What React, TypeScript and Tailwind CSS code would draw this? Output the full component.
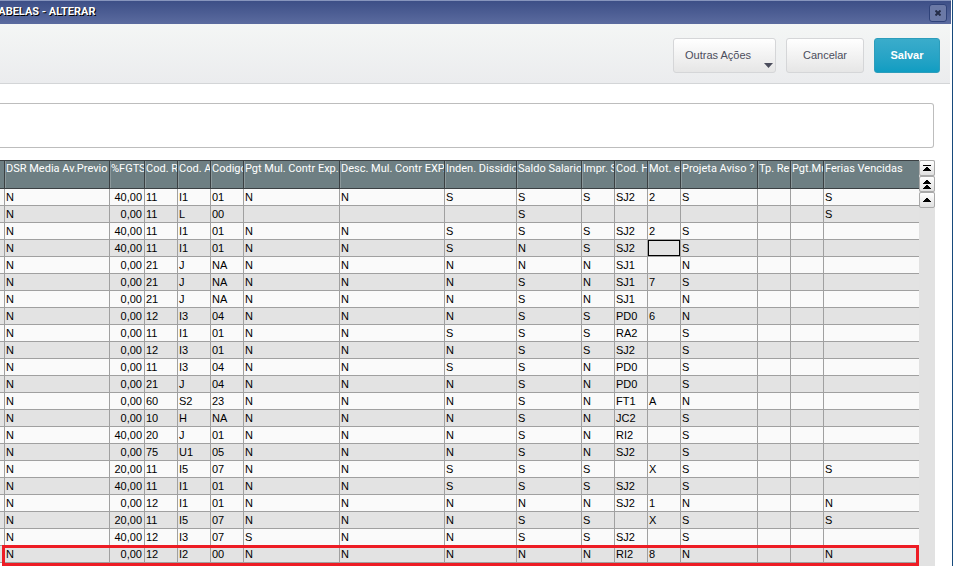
import React from 'react';

interface Column {
  label: string;
  width: string;
  numeric?: boolean;
}

const columns: Column[] = [
  { label: 'DSR Media Av.Previo', width: 'w-[105px]' },
  { label: '%FGTS', width: 'w-[35px]', numeric: true },
  { label: 'Cod. R', width: 'w-[33px]' },
  { label: 'Cod. A', width: 'w-[33px]' },
  { label: 'Codigo', width: 'w-[33px]' },
  { label: 'Pgt Mul. Contr Exp.', width: 'w-[96px]' },
  { label: 'Desc. Mul. Contr EXP.', width: 'w-[105px]' },
  { label: 'Inden. Dissidio', width: 'w-[72px]' },
  { label: 'Saldo Salario', width: 'w-[65px]' },
  { label: 'Impr. S', width: 'w-[33px]' },
  { label: 'Cod. H', width: 'w-[33px]' },
  { label: 'Mot. eS', width: 'w-[33px]' },
  { label: 'Projeta Aviso ?', width: 'w-[77px]' },
  { label: 'Tp. Re', width: 'w-[33px]' },
  { label: 'Pgt.Mu', width: 'w-[33px]' },
  { label: 'Ferias Vencidas', width: '' },
];

const rows: string[][] = [
  ['N', '40,00', '11', 'I1', '01', 'N', 'N', 'S', 'S', 'S', 'SJ2', '2', 'S', '', '', 'S'],
  ['N', '0,00', '11', 'L', '00', '', '', '', 'S', '', '', '', '', '', '', 'S'],
  ['N', '40,00', '11', 'I1', '01', 'N', 'N', 'S', 'S', 'S', 'SJ2', '2', 'S', '', '', ''],
  ['N', '40,00', '11', 'I1', '01', 'N', 'N', 'S', 'N', 'S', 'SJ2', '', 'S', '', '', ''],
  ['N', '0,00', '21', 'J', 'NA', 'N', 'N', 'N', 'N', 'N', 'SJ1', '', 'N', '', '', ''],
  ['N', '0,00', '21', 'J', 'NA', 'N', 'N', 'N', 'S', 'N', 'SJ1', '7', 'S', '', '', ''],
  ['N', '0,00', '21', 'J', 'NA', 'N', 'N', 'N', 'S', 'N', 'SJ1', '', 'N', '', '', ''],
  ['N', '0,00', '12', 'I3', '04', 'N', 'N', 'N', 'S', 'S', 'PD0', '6', 'N', '', '', ''],
  ['N', '0,00', '11', 'I1', '01', 'N', 'N', 'S', 'S', 'S', 'RA2', '', 'S', '', '', ''],
  ['N', '0,00', '12', 'I3', '01', 'N', 'N', 'N', 'S', 'S', 'SJ2', '', 'S', '', '', ''],
  ['N', '0,00', '11', 'I3', '04', 'N', 'N', 'S', 'S', 'N', 'PD0', '', 'S', '', '', ''],
  ['N', '0,00', '21', 'J', '04', 'N', 'N', 'N', 'S', 'N', 'PD0', '', 'S', '', '', ''],
  ['N', '0,00', '60', 'S2', '23', 'N', 'N', 'N', 'S', 'N', 'FT1', 'A', 'N', '', '', ''],
  ['N', '0,00', '10', 'H', 'NA', 'N', 'N', 'N', 'S', 'N', 'JC2', '', 'S', '', '', ''],
  ['N', '40,00', '20', 'J', '01', 'N', 'N', 'N', 'S', 'N', 'RI2', '', 'S', '', '', ''],
  ['N', '0,00', '75', 'U1', '05', 'N', 'N', 'N', 'S', 'N', 'SJ2', '', 'S', '', '', ''],
  ['N', '20,00', '11', 'I5', '07', 'N', 'N', 'S', 'S', 'S', '', 'X', 'S', '', '', 'S'],
  ['N', '40,00', '11', 'I1', '01', 'N', 'N', 'S', 'S', 'S', 'SJ2', '', 'S', '', '', ''],
  ['N', '0,00', '12', 'I1', '01', 'N', 'N', 'N', 'N', 'N', 'SJ2', '1', 'N', '', '', 'N'],
  ['N', '20,00', '11', 'I5', '07', 'N', 'N', 'N', 'S', 'S', '', 'X', 'S', '', '', 'S'],
  ['N', '40,00', '12', 'I3', '07', 'S', 'N', 'N', 'S', 'S', 'SJ2', '', 'S', '', '', ''],
  ['N', '0,00', '12', 'I2', '00', 'N', 'N', 'N', 'N', 'N', 'RI2', '8', 'N', '', '', 'N'],
];

const SELECTED = { row: 3, col: 11 };

const TitleBar = () => (
  <header className="flex h-6 items-center justify-between border-t border-[#8795bd] bg-linear-to-b from-[#3d4f87] to-[#5b6b9f] pr-1">
    <h1 className="-ml-2 font-[Roboto,sans-serif] text-[11px] font-bold text-white [text-shadow:1px_1px_0_#000]">
      TABELAS - ALTERAR
    </h1>
    <button
      aria-label="Fechar"
      className="flex h-[18px] w-[18px] items-center justify-center rounded-[3px] border border-[#2f4279] bg-[#6b79a6]"
    >
      <svg width="6" height="6" viewBox="0 0 6 6" stroke="#252d48" strokeWidth="2">
        <path d="M0.500 0.500l5 5M5.500 0.500l-5 5" />
      </svg>
    </button>
  </header>
);

const Toolbar = () => (
  <div className="mr-px flex h-[60px] items-center justify-end gap-[10px] border-b border-[#d3d5d7] bg-linear-to-b from-[#f4f6f5] to-[#ebecee] pt-1 pr-[10px] text-[11px] text-[#4b4d5c]">
    <button className="relative h-[35px] w-[103px] rounded-[3px] border border-[#d5d6d8] bg-linear-to-b from-white to-[#e6e6e6] pl-[11px] text-left">
      Outras Ações
      <svg className="absolute right-[2px] bottom-1" width="9" height="5" viewBox="0 0 9 5" fill="#4b4d5c">
        <path d="M0 0h9L4.500 5z" />
      </svg>
    </button>
    <button className="h-[35px] w-[78px] rounded-[3px] border border-[#d5d6d8] bg-linear-to-b from-white to-[#e6e6e6]">
      Cancelar
    </button>
    <button className="h-[35px] w-[66px] rounded-[3px] border border-[#2c9dbb] bg-linear-to-b from-[#3aaccb] to-[#0f9dc2] font-bold text-white">
      Salvar
    </button>
  </div>
);

const ScrollButtons = () => {
  const box =
    'flex h-4 w-4 items-center justify-center rounded-[2px] border border-[#a9a9a9] bg-linear-to-b from-white to-[#e0e0e0]';

  return (
    <div className="flex w-4 shrink-0 flex-col bg-[#e2e2e2]">
      <button aria-label="Primeiro" className={box}>
        <svg width="8" height="8" viewBox="0 0 8 8" shapeRendering="crispEdges">
          <path d="M0 1h8v1H0zM3 3h2v1h1v1h1v1h1v1H0V6h1V5h1V4h1z" />
        </svg>
      </button>
      <button aria-label="Página anterior" className={box}>
        <svg width="8" height="10" viewBox="0 0 8 10" shapeRendering="crispEdges">
          <path d="M3 1h2v1h1v1h1v1h1v1H0V4h1V3h1V2h1zM3 6h2v1h1v1h1v1h1v1H0V9h1V8h1V7h1z" />
        </svg>
      </button>
      <button aria-label="Linha anterior" className={box}>
        <svg width="8" height="6" viewBox="0 0 8 6" shapeRendering="crispEdges">
          <path d="M3 1h2v1h1v1h1v1h1v1H0V4h1V3h1V2h1z" />
        </svg>
      </button>
    </div>
  );
};

const Grid = () => (
  <table className="w-full table-fixed border-separate border-spacing-0 text-[11px] leading-4 text-black">
    <colgroup>
      <col className="w-[5px]" />
      {columns.map((column) => (
        <col key={column.label} className={column.width} />
      ))}
    </colgroup>
    <thead>
      <tr className="h-[29px] bg-[#6e7f83] text-white">
        <td className="border-y border-r border-[#3b4043] p-0" />
        {columns.map((column) => (
          <th
            key={column.label}
            className="overflow-hidden border-y border-r border-[#3b4043] p-0 pl-px text-left align-top font-[Roboto,sans-serif] font-normal whitespace-nowrap shadow-[inset_1px_0_0_#8b989b] last:border-r-0"
          >
            {column.label}
          </th>
        ))}
      </tr>
    </thead>
    <tbody>
      {rows.map((row, rowIndex) => (
        <tr key={rowIndex} className="h-[17px] odd:bg-[#fafafa] even:bg-[#e3e3e3]">
          <td className="border-r border-b border-[#a0a0a0] p-0" />
          {row.map((value, colIndex) => {
            const selected = rowIndex === SELECTED.row && colIndex === SELECTED.col;
            return (
              <td
                key={colIndex}
                className={`h-[17px] overflow-hidden border-r border-b border-[#a0a0a0] p-0 whitespace-nowrap last:border-r-0 ${
                  columns[colIndex].numeric ? 'pr-[2px] text-right' : 'pl-px'
                } ${selected ? 'shadow-[inset_0_0_0_1px_#000]' : ''}`}
              >
                {value}
              </td>
            );
          })}
        </tr>
      ))}
    </tbody>
  </table>
);

export default function App() {
  return (
    <div className="flex min-h-screen flex-col overflow-hidden border-r border-[#174a7c] bg-white pr-px font-['Liberation_Sans',Arial,sans-serif]">
      <TitleBar />
      <Toolbar />
      <main className="flex flex-1 flex-col pt-[19px] pr-4">
        <section className="mr-px h-[45px] rounded-r-[3px] border border-l-0 border-[#bdbdbd]" />
        <div className="mt-3 flex flex-1">
          <div className="relative min-w-0 flex-1 self-start">
            <Grid />
            {/* red frame around the new record */}
            <div className="pointer-events-none absolute right-0 -bottom-[3px] left-[2px] h-[21px] border-3 border-[#ed1c24]" />
          </div>
          <ScrollButtons />
        </div>
      </main>
    </div>
  );
}
